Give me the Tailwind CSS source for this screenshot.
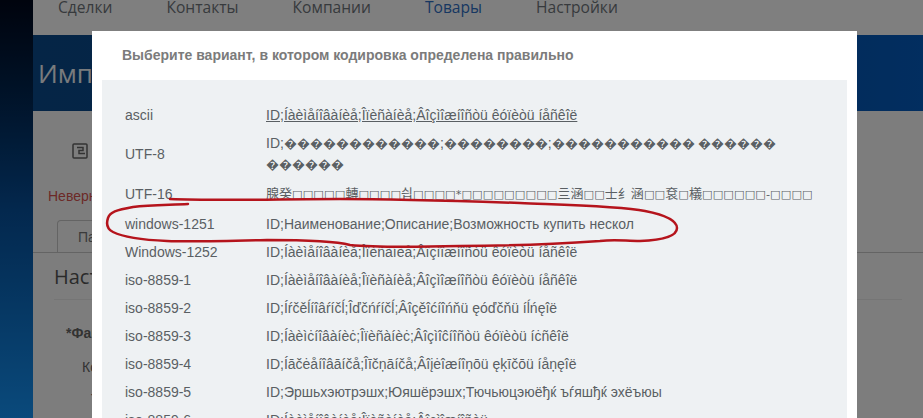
<!DOCTYPE html>
<html lang="ru">
<head>
  <meta charset="UTF-8" />
  <meta name="viewport" content="width=device-width, initial-scale=1.0"/>
  <title>Импорт товаров</title>
  <script src="https://cdn.jsdelivr.net/npm/@tailwindcss/browser@4"></script>
</head>
<body class="relative h-[418px] overflow-hidden bg-linear-to-b from-[#00081c] via-[#07509c] to-[#1494f8] font-['Open_Sans',sans-serif]">
  <!-- страница под модальным окном -->
  <div class="ml-[33px] flex h-full flex-col">
    <nav class="flex h-[35px] shrink-0 gap-[54px] overflow-hidden bg-white pl-[25px] text-[15.6px] leading-[14px] text-[#6f757b]">
      <a>Сделки</a>
      <a>Контакты</a>
      <a>Компании</a>
      <a class="text-[#2f6fc4]">Товары</a>
      <a>Настройки</a>
    </nav>
    <div class="flex h-[76px] shrink-0 items-center bg-linear-to-r from-[#0a4a8c] via-[#064a96] to-[#045cc0] pl-[5px] text-[26px] text-[#f2f6fa]">Импорт товаров</div>
    <div class="flex-1 bg-[#fbfbfb] pt-[32px]">
      <svg class="ml-[39px] size-4 text-[#666]" viewBox="0 0 16 16" fill="none" stroke="currentColor" stroke-width="1.5">
        <rect x="1" y="1" width="14" height="14" rx="1" />
        <path d="M5 4.5h6v3H7v3h6" />
      </svg>
      <p class="mt-[27px] ml-[15px] h-[20px] text-[14px] leading-[20px] text-[#d9534f] font-['Liberation_Sans',sans-serif]">Неверный формат файла</p>
      <div class="mt-[14px] flex h-[33px] border-b border-[#c8c8c8] pl-[24px]">
        <div class="h-[33px] w-[110px] rounded-t border-x border-t border-[#c8c8c8] pt-[6px] pl-[20px] text-[14px] text-[#777] font-['Liberation_Sans',sans-serif]">Параметры</div>
      </div>
      <div class="mx-[21px] h-[47px] border-b border-[#eaeaea] pt-[10px] text-[20px] leading-[28px] text-[#555]">Настройки импорта</div>
      <div class="font-['Liberation_Sans',sans-serif] text-[14px] text-[#666]">
        <p class="mt-[23px] ml-[33px] font-bold">*Файл</p>
        <p class="mt-[13px] ml-[49px]">Кодировка</p>
        <p class="mt-[11px] ml-[58px]">Тип</p>
      </div>
    </div>
  </div>

  <div class="absolute inset-0 bg-black/50"></div>

  <!-- окно выбора кодировки -->
  <div class="absolute top-[31px] left-[92px] h-[387px] w-[765px] overflow-hidden bg-white px-[10px] font-['Liberation_Sans',sans-serif]">
    <h3 class="h-[49px] pt-[14px] pl-[20px] text-[14px] leading-[20px] font-bold text-[#7b7b7b]">Выберите вариант, в котором кодировка определена правильно</h3>
    <div class="h-[400px] bg-[#eef1f3] pt-[21px] pl-[23px] text-[14px] leading-[20px] text-[#5a5f63]">
      <div class="flex h-[28px] items-center"><span class="w-[141px] shrink-0">ascii</span><span class="underline">ID;Íàèìåíîâàíèå;Îïèñàíèå;Âîçìîæíîñòü êóïèòü íåñêîë</span></div>
      <div class="flex h-[49px] items-center"><span class="w-[141px] shrink-0">UTF-8</span><span class="whitespace-nowrap">ID;<span class="text-[13px]">������������</span>;<span class="text-[13px]">��������</span>;<span class="text-[13px]">����������� ������</span><br><span class="text-[13px]">������</span></span></div>
      <div class="flex h-[32px] items-center"><span class="w-[141px] shrink-0">UTF-16</span><span class="whitespace-nowrap text-[11.3px] font-['DejaVu_Sans','Noto_Sans_CJK_SC',sans-serif]"><span class="text-[13px]">腺癸</span>□□□□□<span class="text-[13px]">轉</span>□□□□<span class="text-[13px]">싑</span>□□□□*□□□□□□□□□<span class="text-[13px]">亖涵</span>□□<span class="text-[13px]">士纟涵</span>□□<span class="text-[13px]">袞</span>□<span class="text-[13px]">檥</span>□□□□□□-□□□□</span></div>
      <div class="flex h-[28px] items-center"><span class="w-[141px] shrink-0">windows-1251</span><span>ID;Наименование;Описание;Возможность купить нескол</span></div>
      <div class="flex h-[28px] items-center"><span class="w-[141px] shrink-0">Windows-1252</span><span>ID;Íàèìåíîâàíèå;Îïèñàíèå;Âîçìîæíîñòü êóïèòü íåñêîë</span></div>
      <div class="flex h-[28px] items-center"><span class="w-[141px] shrink-0">iso-8859-1</span><span>ID;Íàèìåíîâàíèå;Îïèñàíèå;Âîçìîæíîñòü êóïèòü íåñêîë</span></div>
      <div class="flex h-[28px] items-center"><span class="w-[141px] shrink-0">iso-8859-2</span><span>ID;Íŕčěĺíîâŕíčĺ;Îďčńŕíčĺ;Âîçěîćíîńňü ęóďčňü íĺńęîë</span></div>
      <div class="flex h-[28px] items-center"><span class="w-[141px] shrink-0">iso-8859-3</span><span>ID;Íàèìċíîâàíèċ;Îïèñàíèċ;Âîçìîĉíîñòü êóïèòü íċñêîë</span></div>
      <div class="flex h-[28px] items-center"><span class="w-[141px] shrink-0">iso-8859-4</span><span>ID;Íāčėåíîâāíčå;Îīčņāíčå;Âîįėîæíîņōü ęķīčōü íåņęîë</span></div>
      <div class="flex h-[28px] items-center"><span class="w-[141px] shrink-0">iso-8859-5</span><span>ID;Эршьхэютрэшх;Юяшёрэшх;Тючьюцэюёђќ ъѓяшђќ эхёъюы</span></div>
      <div class="flex h-[28px] items-center"><span class="w-[141px] shrink-0">iso-8859-6</span><span>ID;Íàèìåíîâàíèå;Îïèñàíèå;Âîçìîæíîñòü</span></div>
    </div>
  </div>

  <!-- пометка красным поверх скриншота -->
  <svg class="absolute inset-0 h-[418px] w-[923px]" viewBox="0 0 923 418" fill="none" stroke="#b5141c" stroke-width="2.5" stroke-linecap="round" stroke-linejoin="round">
    <path d="M170 199C220 201 280 199 340 199C400 199 460 201 520 203C570 205 620 206 645 211C665 215 677 220 677 228C677 236 665 240 640 241C625 241 615 239 600 241C570 243 520 246 460 246C420 247 370 247 350 245C335 241 300 240 267 240C230 241 190 242 167 241C145 240 125 238 113 232C107 229 106 224 108 218C110 212 116 210 133 207C150 205 170 205 188 204" />
  </svg>
</body>
</html>
